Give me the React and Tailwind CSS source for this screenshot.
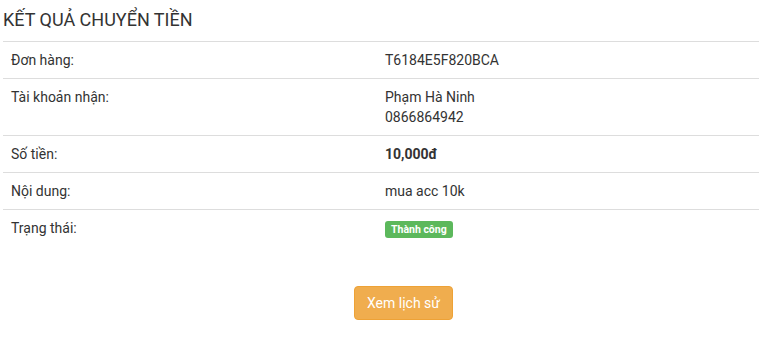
export default function App() {
  const rows = [
    { label: "Đơn hàng:", value: <span>T6184E5F820BCA</span> },
    {
      label: "Tài khoản nhận:",
      value: (
        <div>
          <div>Phạm Hà Ninh</div>
          <div>0866864942</div>
        </div>
      ),
    },
    { label: "Số tiền:", value: <span className="font-bold">10,000đ</span> },
    { label: "Nội dung:", value: <span>mua acc 10k</span> },
    {
      label: "Trạng thái:",
      value: (
        <span className="inline-block bg-[#5cb85c] text-white font-bold text-[10.5px] leading-[17px] h-[17px] px-[6px] rounded-[3px] mt-[2px]">
          Thành công
        </span>
      ),
    },
  ];
  return (
    <div
      className="w-[759px] h-[359px] bg-white text-[#333] text-[14px] leading-[20px]"
      style={{ fontFamily: "Roboto, 'Liberation Sans', sans-serif" }}
    >
      <div className="pl-[3px]">
        <h1 className="text-[18px] leading-[20px] pt-[10px] pb-[11px] font-normal text-[#333]">
          KẾT QUẢ CHUYỂN TIỀN
        </h1>
        <div className="w-[756px]">
          {rows.map((r, i) => (
            <div key={i} className="flex border-t border-[#ddd]">
              <div className="w-[374px] p-[8px]">{r.label}</div>
              <div className="flex-1 p-[8px]">{r.value}</div>
            </div>
          ))}
        </div>
      </div>
      <div className="pl-[354px] mt-[40px]">
        <button className="w-[99px] h-[34px] bg-[#f0ad4e] border border-[#eea236] rounded-[4px] text-white text-[14px]">
          Xem lịch sử
        </button>
      </div>
    </div>
  );
}
